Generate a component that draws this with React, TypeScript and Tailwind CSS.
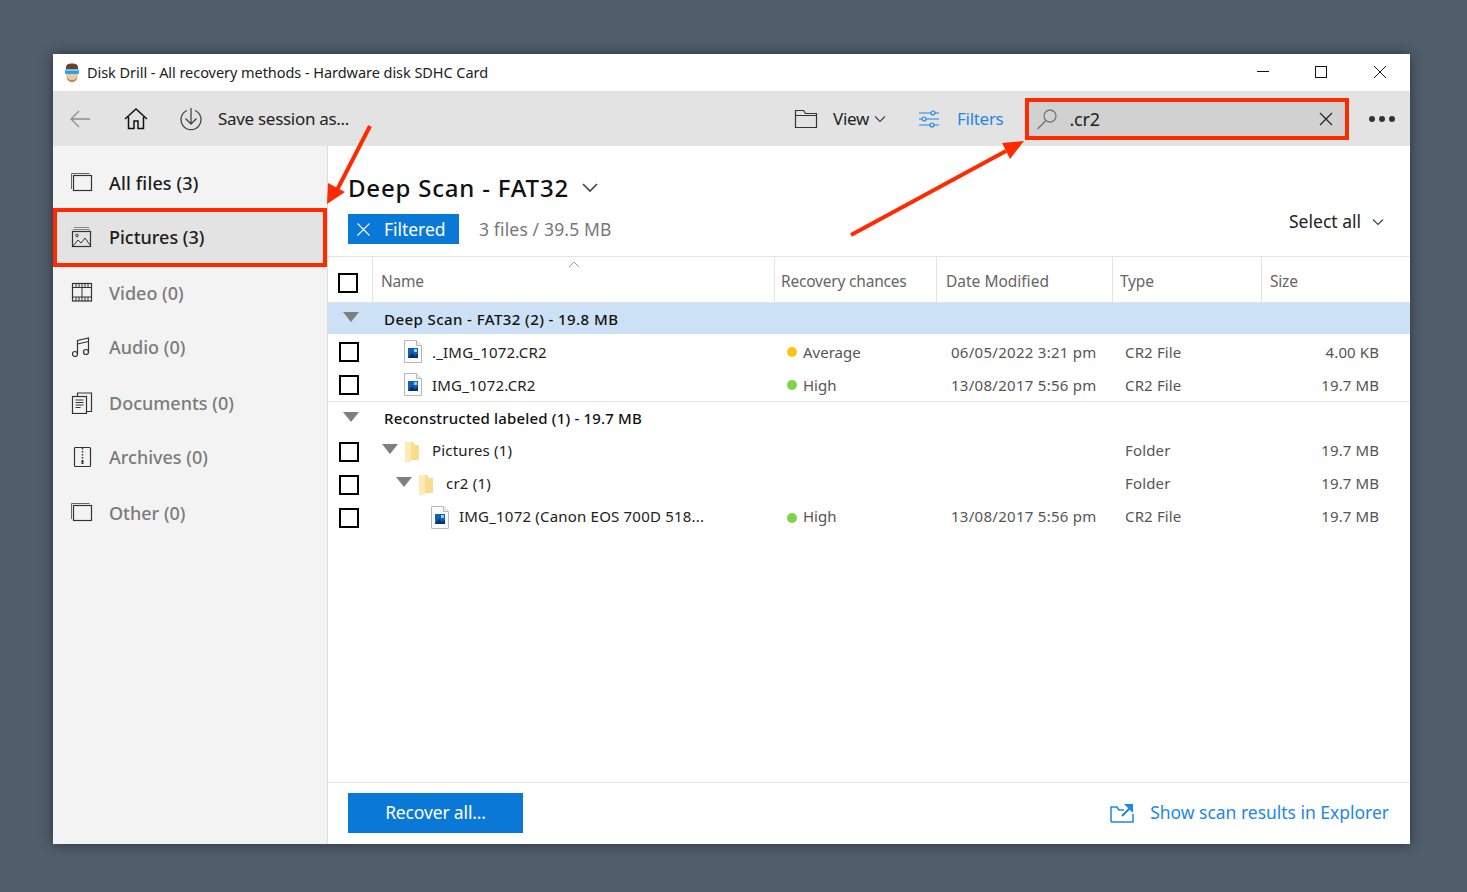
import * as React from "react";

type Row = {
  indent: number;
  kind: "file" | "folder";
  name: string;
  chance?: "Average" | "High";
  date?: string;
  type: string;
  size: string;
  arrow?: boolean;
};

function Check() {
  return <span className="block h-[20px] w-[20px] border-2 border-black bg-white" />;
}

function Tri({ className = "" }: { className?: string }) {
  return (
    <svg width="16" height="10" viewBox="0 0 16 10" className={className}>
      <path d="M0 0h16L8 10z" fill="#7f7f7f" />
    </svg>
  );
}

function FileIcon() {
  return (
    <svg width="18" height="23" viewBox="0 0 18 23" className="shrink-0">
      <path d="M.5.5h12l5 5v17H.5z" fill="#fbfbfb" stroke="#b8b8b8" />
      <path d="M12.5.5v5h5" fill="#eee" stroke="#b8b8b8" />
      <rect x="4" y="8" width="10" height="10" fill="#0f5fb5" />
      <path d="M4 18l4-5 3 3 3-2v4z" fill="#0b2f66" />
      <rect x="10" y="9" width="3" height="3" fill="#8fd0f5" />
    </svg>
  );
}

function FolderIcon() {
  return (
    <svg width="16" height="23" viewBox="0 0 16 23" className="shrink-0">
      <path d="M1 2h8l2 3h4v15H4l-3 2z" fill="#fbdc8c" />
      <path d="M1 2h6v20H1z" fill="#fdeab5" />
    </svg>
  );
}

const sideIcon = "h-[22px] w-[22px] shrink-0 fill-none stroke-[#333]";

function AllIcon() {
  return (
    <svg viewBox="0 0 22 22" className={sideIcon}>
      <path d="M.5 17V1.500h18" stroke="#666" />
      <rect x="2.500" y="3.500" width="18" height="15" strokeWidth="1.200" />
    </svg>
  );
}
function PicIcon() {
  return (
    <svg viewBox="0 0 22 22" className={sideIcon}>
      <path d="M3 .5h15M2 2.500h17" stroke="#888" />
      <rect x="1.500" y="4.500" width="18" height="15" strokeWidth="1.200" />
      <path d="M2 19l5-6 3 3 4-5 5 7" />
      <circle cx="6" cy="8.500" r="1.300" />
    </svg>
  );
}
function VideoIcon() {
  return (
    <svg viewBox="0 0 22 22" className={sideIcon}>
      <rect x="1.500" y="1.500" width="19" height="17.500" strokeWidth="1.200" />
      <path d="M1.500 5.500h19M1.500 15h19M11 5.500V15M5 1.500v4M8 1.500v4M11 1.500v4M14 1.500v4M17 1.500v4M5 15v4M8 15v4M11 15v4M14 15v4M17 15v4" />
    </svg>
  );
}
function AudioIcon() {
  return (
    <svg viewBox="0 0 22 22" className={sideIcon}>
      <circle cx="4" cy="18" r="2.500" strokeWidth="1.200" />
      <circle cx="15" cy="16" r="2.500" strokeWidth="1.200" />
      <path d="M6.500 18V4.500l11-2.500v14M6.500 8l11-2.500" strokeWidth="1.200" />
    </svg>
  );
}
function DocIcon() {
  return (
    <svg viewBox="0 0 22 22" className={sideIcon}>
      <path d="M15.500 19.500h5V1h-14v3" strokeWidth="1.200" />
      <rect x="1.500" y="4.500" width="14" height="17" strokeWidth="1.200" fill="#f3f3f3" />
      <path d="M4.500 8h8M4.500 10.500h8M4.500 13h8M4.500 15.500h5" />
    </svg>
  );
}
function ArchiveIcon() {
  return (
    <svg viewBox="0 0 22 22" className={sideIcon}>
      <rect x="3.500" y="1.500" width="16" height="19" rx="1" strokeWidth="1.200" />
      <path d="M11.500 2v12" strokeDasharray="1.500 1.500" strokeWidth="1.500" />
      <path d="M11.500 14v4" strokeWidth="2" />
    </svg>
  );
}

const files: Row[] = [
  { indent: 1, kind: "file", name: "._IMG_1072.CR2", chance: "Average", date: "06/05/2022 3:21 pm", type: "CR2 File", size: "4.00 KB" },
  { indent: 1, kind: "file", name: "IMG_1072.CR2", chance: "High", date: "13/08/2017 5:56 pm", type: "CR2 File", size: "19.7 MB" },
];

const recon: Row[] = [
  { indent: 1, kind: "folder", arrow: true, name: "Pictures (1)", type: "Folder", size: "19.7 MB" },
  { indent: 2, kind: "folder", arrow: true, name: "cr2 (1)", type: "Folder", size: "19.7 MB" },
  { indent: 3, kind: "file", name: "IMG_1072 (Canon EOS 700D 518...", chance: "High", date: "13/08/2017 5:56 pm", type: "CR2 File", size: "19.7 MB" },
];

const cols = "grid grid-cols-[45px_402px_162px_176px_149px_148px]";

function TableRow({ r, nudge }: { r: Row; nudge: string }) {
  const pad = r.indent === 1 ? "pl-[31px]" : r.indent === 2 ? "pl-[45px]" : "pl-[58px]";
  return (
    <div className={`${cols} h-[33px] items-center text-[15px] text-[#333]`}>
      <div className="pl-[11px]"><Check /></div>
      <div className={`relative flex items-center ${pad} tracking-[0.2px] text-[#222]`}>
        {r.arrow && <Tri className="absolute top-[5px] ml-[-22px]" />}
        {r.kind === "file" ? <FileIcon /> : <FolderIcon />}
        <span className={`${r.kind === "file" ? "ml-[10px]" : "ml-[12px]"} ${nudge}`}>{r.name}</span>
      </div>
      <div className="flex items-center pl-[12px] text-[#555]">
        {r.chance && (
          <>
            <span className={`mr-[6px] h-[10px] w-[10px] rounded-full ${r.chance === "High" ? "bg-[#7ed348]" : "bg-[#fcc419]"}`} />
            <span className={nudge}>{r.chance}</span>
          </>
        )}
      </div>
      <div className={`pl-[14px] tracking-[0.28px] text-[#555] ${nudge}`}>{r.date}</div>
      <div className={`pl-[12px] tracking-[0.15px] text-[#555] ${nudge}`}>{r.type}</div>
      <div className={`pr-[31px] text-right tracking-[0.1px] text-[#555] ${nudge}`}>{r.size}</div>
    </div>
  );
}

const side: { label: string; Icon: () => React.ReactElement; cls: string }[] = [
  { label: "Video (0)", Icon: VideoIcon, cls: "mt-[-1px]" },
  { label: "Audio (0)", Icon: AudioIcon, cls: "" },
  { label: "Documents (0)", Icon: DocIcon, cls: "mt-[2px]" },
  { label: "Archives (0)", Icon: ArchiveIcon, cls: "" },
  { label: "Other (0)", Icon: AllIcon, cls: "mt-[2px]" },
];

export default function App() {
  return (
    <div className="flex h-screen w-full bg-[#505d6b] pl-[53px] pt-[54px] font-['Noto_Sans',sans-serif]">
      <div className="relative flex h-[790px] w-[1357px] flex-col bg-white shadow-[0_0_12px_rgba(0,0,0,0.45)]">
        {/* title bar */}
        <div className="flex h-[37px] items-center">
          <svg width="16" height="20" viewBox="0 0 16 20" className="ml-[11px]">
            <ellipse cx="8" cy="11" rx="6" ry="8.500" fill="#efc9a4" />
            <path d="M2 7C1 1 5 .5 8 .5S15 1 14 7z" fill="#6b4226" />
            <rect x="1" y="6" width="14" height="5" rx="1" fill="#29a3e6" />
            <path d="M1 7h14" stroke="#bfe6fa" />
            <path d="M3 14c1 4 9 4 10 0v2c-2 4-8 4-10 0z" fill="#b58a66" />
          </svg>
          <span className="ml-[7px] text-[14.500px] tracking-[-0.05px] text-[#222]">Disk Drill - All recovery methods - Hardware disk SDHC Card</span>
          <div className="ml-auto flex items-center pr-[23px]">
            <svg width="14" height="14" viewBox="0 0 14 14" className="mb-[2px] mr-[44px]"><path d="M1 6.500h12" stroke="#111" /></svg>
            <svg width="14" height="14" viewBox="0 0 14 14" className="mb-[1px] mr-[45px]"><rect x="1.500" y="1.500" width="11" height="11" fill="none" stroke="#111" /></svg>
            <svg width="14" height="14" viewBox="0 0 14 14" className="mb-[1px]"><path d="M1 1l12 12M13 1L1 13" stroke="#111" /></svg>
          </div>
        </div>

        {/* toolbar */}
        <div className="flex h-[55px] items-center bg-[#e3e3e3]">
          <svg width="22" height="20" viewBox="0 0 22 20" className="ml-[16px]">
            <path d="M21 10H2M10 2l-8 8 8 8" fill="none" stroke="#8f8f8f" strokeWidth="1.300" />
          </svg>
          <svg width="24" height="24" viewBox="0 0 24 24" className="ml-[33px]">
            <path d="M1 12L12 2l11 10M4.500 10v11.500h5.500V14h4v7.500h5.500V10" fill="none" stroke="#111" strokeWidth="1.500" />
          </svg>
          <svg width="22" height="24" viewBox="0 0 22 24" className="ml-[32px]">
            <path d="M7 3.500a10 10 0 1 0 8 0M11 1v16M5.500 11.500L11 17l5.500-5.500" fill="none" stroke="#444" strokeWidth="1.300" />
          </svg>
          <span className="ml-[16px] text-[17px] tracking-[-0.3px] text-[#222]">Save session as...</span>

          <svg width="24" height="20" viewBox="0 0 24 20" className="ml-[445px]">
            <path d="M1.500 18.500V1.500h8l2 3h11v14zM1.500 6.500h21" fill="none" stroke="#333" strokeWidth="1.200" />
          </svg>
          <span className="ml-[15px] text-[17px] tracking-[-0.3px] text-[#222]">View</span>
          <svg width="12" height="8" viewBox="0 0 12 8" className="ml-[5px]"><path d="M1 1.500l5 5 5-5" fill="none" stroke="#444" strokeWidth="1.200" /></svg>
          <svg width="22" height="20" viewBox="0 0 22 20" className="ml-[32px]">
            <g fill="none" stroke="#1e88e5" strokeWidth="1.200">
              <path d="M1 4h12M17 4h4M1 10h3M8 10h13M1 16h11M16 16h5" />
              <circle cx="15" cy="4" r="2" /><circle cx="6" cy="10" r="2" /><circle cx="14" cy="16" r="2" />
            </g>
          </svg>
          <span className="ml-[17px] text-[17px] tracking-[-0.3px] text-[#1e88e5]">Filters</span>

          <div className="ml-[22px] flex h-[42px] w-[324px] items-center border-[4px] border-[#ff2a00] bg-[#d1d1d1]">
            <svg width="22" height="22" viewBox="0 0 22 22" className="ml-[7px]">
              <circle cx="14" cy="8" r="6" fill="none" stroke="#777" strokeWidth="1.300" />
              <path d="M10 12.500L1.500 21" stroke="#777" strokeWidth="1.500" />
            </svg>
            <span className="ml-[11px] pt-[2px] text-[18px] tracking-[-0.2px] text-[#222]">.cr2</span>
            <svg width="14" height="14" viewBox="0 0 14 14" className="ml-auto mr-[12px]"><path d="M1 1l12 12M13 1L1 13" stroke="#222" strokeWidth="1.200" /></svg>
          </div>
          <div className="ml-[20px] flex gap-[4px]">
            <span className="h-[6px] w-[6px] rounded-full bg-[#333]" />
            <span className="h-[6px] w-[6px] rounded-full bg-[#333]" />
            <span className="h-[6px] w-[6px] rounded-full bg-[#333]" />
          </div>
        </div>

        <div className="flex min-h-0 flex-1">
          {/* sidebar */}
          <div className="w-[275px] shrink-0 border-r border-[#dcdcdc] bg-[#f3f3f3] pt-[10px]">
            <div className="flex h-[54px] items-center pl-[18px] text-[18px] font-medium text-[#1c1c1c]">
              <AllIcon />
              <span className="ml-[16px] tracking-[0.15px]">All files (3)</span>
            </div>
            <div className="mt-[-2px] flex h-[59px] w-[274px] items-center border-[4px] border-[#ff2a00] bg-[#e3e3e3] pl-[14px] text-[18px] font-medium text-[#1c1c1c]">
              <PicIcon />
              <span className="ml-[16px]">Pictures (3)</span>
            </div>
            {side.map(({ label, Icon, cls }) => (
              <div key={label} className={`flex h-[54px] items-center pl-[18px] text-[18px] font-medium text-[#7b7b7b] ${cls}`}>
                <Icon />
                <span className="ml-[16px]">{label}</span>
              </div>
            ))}
          </div>

          {/* main */}
          <div className="flex min-w-0 flex-1 flex-col">
            <div className="h-[110px] shrink-0">
              <div className="flex items-center pl-[20px] pt-[24px]">
                <span className="text-[24px] font-medium leading-[36px] tracking-[0.8px] text-[#111]">Deep Scan - FAT32</span>
                <svg width="16" height="10" viewBox="0 0 16 10" className="ml-[13px]"><path d="M1 1l7 7 7-7" fill="none" stroke="#444" strokeWidth="1.600" /></svg>
              </div>
              <div className="mt-[8px] flex h-[30px] items-center pl-[20px] pr-[26px]">
                <div className="flex h-[30px] w-[111px] items-center bg-[#0a78d7] pl-[9px] text-white">
                  <svg width="13" height="13" viewBox="0 0 13 13"><path d="M.5.500l12 12M12.500.500l-12 12" stroke="#fff" strokeWidth="1.100" /></svg>
                  <span className="ml-[14px] text-[17.500px] tracking-[-0.05px]">Filtered</span>
                </div>
                <span className="ml-[20px] text-[17.500px] tracking-[0.15px] text-[#777]">3 files / 39.5 MB</span>
                <div className="ml-auto mt-[-15px] flex items-center text-[17.500px] text-[#222]">
                  Select all
                  <svg width="12" height="8" viewBox="0 0 12 8" className="ml-[11px]"><path d="M1 1.500l5 5 5-5" fill="none" stroke="#444" strokeWidth="1.200" /></svg>
                </div>
              </div>
            </div>

            {/* table */}
            <div className={`${cols} h-[47px] shrink-0 border-y border-[#e3e3e3] text-[15.500px] tracking-[-0.2px] text-[#666]`}>
              <div className="flex items-center border-r border-[#e3e3e3] pl-[10px] pt-[7px]"><Check /></div>
              <div className="relative flex items-center border-r border-[#e3e3e3] pl-[8px] pt-[5px]">
                Name
                <svg width="12" height="7" viewBox="0 0 12 7" className="absolute left-[195px] top-[4px]"><path d="M1 6l5-5 5 5" fill="none" stroke="#999" /></svg>
              </div>
              <div className="flex items-center border-r border-[#e3e3e3] pl-[6px] pt-[5px]">Recovery chances</div>
              <div className="flex items-center border-r border-[#e3e3e3] pl-[9px] pt-[5px] tracking-[0px]">Date Modified</div>
              <div className="flex items-center border-r border-[#e3e3e3] pl-[7px] pt-[5px]">Type</div>
              <div className="flex items-center pl-[8px] pt-[5px]">Size</div>
            </div>
            <div className="flex h-[31px] shrink-0 items-center bg-[#cce1f6] text-[15px] font-medium tracking-[0.42px] text-[#111]">
              <Tri className="ml-[15px] mt-[-4px]" />
              <span className="ml-[25px] pt-[2px]">Deep Scan - FAT32 (2) - 19.8 MB</span>
            </div>
            <div className="h-[1px] shrink-0" />
            {files.map((r) => <TableRow key={r.name} r={r} nudge="pt-[2px]" />)}
            <div className="flex h-[34px] shrink-0 items-center border-t border-[#e3e3e3] text-[15px] font-medium tracking-[0.17px] text-[#111]">
              <Tri className="ml-[15px] mt-[-4px]" />
              <span className="ml-[25px]">Reconstructed labeled (1) - 19.7 MB</span>
            </div>
            {recon.map((r) => <TableRow key={r.name} r={r} nudge="pb-[2px]" />)}

            {/* footer */}
            <div className="mt-auto flex h-[62px] shrink-0 items-center border-t border-[#e3e3e3] pb-[2px] pl-[20px] pr-[21px]">
              <div className="flex h-[40px] w-[175px] items-center justify-center bg-[#0a78d7] text-[17.500px] tracking-[-0.15px] text-white">Recover all...</div>
              <svg width="24" height="20" viewBox="0 0 24 20" className="ml-auto">
                <path d="M1 19V4h6l2 3h5M1 19h22v-8" fill="none" stroke="#1e88e5" strokeWidth="1.500" />
                <path d="M12 13l8-8" stroke="#1e88e5" strokeWidth="2.200" />
                <path d="M14 1h9v9z" fill="#1e88e5" />
              </svg>
              <span className="ml-[16px] text-[17.500px] tracking-[-0.02px] text-[#1e88e5]">Show scan results in Explorer</span>
            </div>
          </div>
        </div>

        {/* annotation arrows */}
        <svg width="1357" height="790" viewBox="0 0 1357 790" className="pointer-events-none absolute left-0 top-0">
          <path d="M317 72L284 136" stroke="#ff2a00" strokeWidth="4" />
          <path d="M274 150l1-21 17 9z" fill="#ff2a00" />
          <path d="M798 181L953 97" stroke="#ff2a00" strokeWidth="4" />
          <path d="M971 87l-22 2 8 16z" fill="#ff2a00" />
        </svg>
      </div>
    </div>
  );
}
